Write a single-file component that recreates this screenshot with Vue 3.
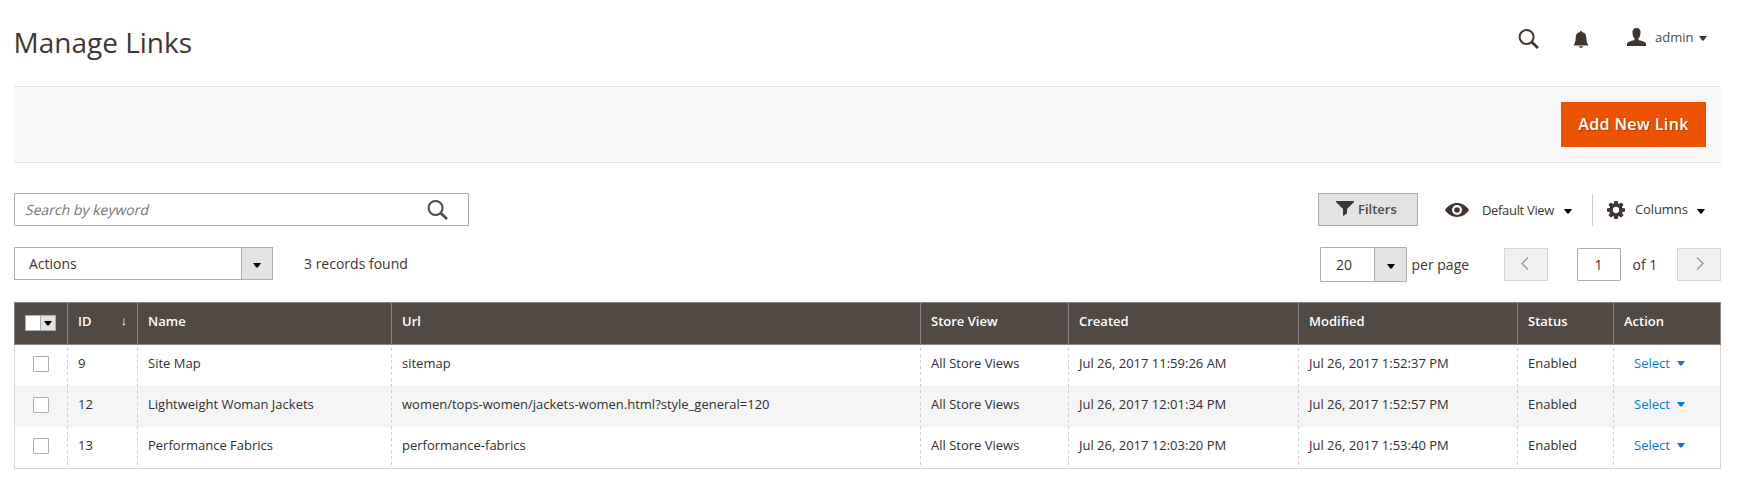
<script setup>
const columns = ['ID', 'Name', 'Url', 'Store View', 'Created', 'Modified', 'Status', 'Action']
const rows = [
  ['9', 'Site Map', 'sitemap', 'All Store Views', 'Jul 26, 2017 11:59:26 AM', 'Jul 26, 2017 1:52:37 PM', 'Enabled'],
  ['12', 'Lightweight Woman Jackets', 'women/tops-women/jackets-women.html?style_general=120', 'All Store Views', 'Jul 26, 2017 12:01:34 PM', 'Jul 26, 2017 1:52:57 PM', 'Enabled'],
  ['13', 'Performance Fabrics', 'performance-fabrics', 'All Store Views', 'Jul 26, 2017 12:03:20 PM', 'Jul 26, 2017 1:53:40 PM', 'Enabled'],
]
</script>

<template>
  <main class="page">
    <header class="header">
      <h1>Manage Links</h1>
      <div class="tools">
        <svg class="search" viewBox="0 0 21 20"><circle cx="8.6" cy="8" r="7" /><path d="M13.4 12.8 20 19" /></svg>
        <svg class="bell" viewBox="0 0 16 17"><path d="M7 1c0-1.300 2-1.300 2 0 3 .5 4.200 2.500 4.300 5.400.1 3.500.7 5.900 2.200 8.100H.5c1.500-2.200 2.100-4.600 2.200-8.100C2.800 3.500 4 1.500 7 1ZM6 15.300h4c-.6 2-3.400 2-4 0Z" /></svg>
        <svg class="user" viewBox="0 0 19 18"><path d="M9.500 0c3 0 4.400 2 4 5-.1 2.700-1 4.500-2 5.500v1.300c1.300 1.200 7.200 1.300 7.500 4.200v2H0v-2c.3-2.900 6.200-3 7.500-4.200v-1.300c-1-1-1.900-2.800-2-5.500C5.100 2 6.500 0 9.500 0Z" /></svg>
        <span class="admin">admin</span>
        <svg class="caret" viewBox="0 0 8 5"><path d="M0 0h8L4.800 4.500H3.200Z" /></svg>
      </div>
    </header>
    <section class="actions-bar"><button class="primary">Add New Link</button></section>

    <section class="toolbar first">
      <div class="keyword">
        <span>Search by keyword</span>
        <svg class="search" viewBox="0 0 21 20"><circle cx="8.600" cy="8" r="7" /><path d="M13.4 12.8 20 19" /></svg>
      </div>
      <div class="view-tools">
        <button class="filters">
          <svg class="funnel" viewBox="0 0 18 15"><path d="M0 0h18v1L11 8v4.500L7 15V8L0 1Z" /></svg>Filters
        </button>
        <svg class="eye" viewBox="0 0 24 14"><path fill-rule="evenodd" d="M0 7C6-2.300 18-2.300 24 7 18 16.300 6 16.300 0 7Zm12-5a5 5 0 1 0 0 10 5 5 0 0 0 0-10Z" /><circle cx="12" cy="7" r="2.800" /></svg>
        <span class="view-label">Default View</span>
        <svg class="caret black" viewBox="0 0 8 5"><path d="M0 0h8L4.800 4.500H3.200Z" /></svg>
        <i class="divider"></i>
        <svg class="gear" viewBox="-9 -9 18 18">
          <circle class="ring" r="4.900" />
          <path v-for="n in 8" :key="n" :transform="`rotate(${n * 45})`" d="M-2.300-5.500-1.600-9H1.600L2.300-5.500Z" />
        </svg>
        <span class="columns-label">Columns</span>
        <svg class="caret black" viewBox="0 0 8 5"><path d="M0 0h8L4.800 4.500H3.200Z" /></svg>
      </div>
    </section>

    <section class="toolbar second">
      <div class="select mass"><span>Actions</span><b><svg class="caret black" viewBox="0 0 8 5"><path d="M0 0h8L4.800 4.500H3.200Z" /></svg></b></div>
      <span class="records">3 records found</span>
      <div class="pager">
        <div class="select size"><span>20</span><b><svg class="caret black" viewBox="0 0 8 5"><path d="M0 0h8L4.800 4.500H3.200Z" /></svg></b></div>
        <span class="per">per page</span>
        <div class="page-btn prev"><svg viewBox="0 0 8 13"><path d="M7 .5 1 6.500l6 6" /></svg></div>
        <div class="page-input">1</div>
        <span class="of">of 1</span>
        <div class="page-btn next"><svg viewBox="0 0 8 13"><path d="m1 .5 6 6-6 6" /></svg></div>
      </div>
    </section>

    <section class="grid">
      <div class="row head">
        <div class="multi"><span class="multi-box"><i></i><b><svg viewBox="0 0 8 5"><path d="M0 0h8L4.800 4.500H3.200Z" /></svg></b></span></div>
        <div v-for="c in columns" :key="c" class="cell">{{ c }}<span v-if="c === 'ID'" class="sort">↓</span></div>
      </div>
      <div class="body">
        <div v-for="r in rows" :key="r[0]" class="row data">
          <div class="check"><i></i></div>
          <div v-for="(v, i) in r" :key="i" class="cell">{{ v }}</div>
          <div class="cell pick">Select<svg class="caret" viewBox="0 0 8 5"><path d="M0 0h8L4.800 4.500H3.200Z" /></svg></div>
        </div>
      </div>
    </section>
  </main>
</template>

<style>
body { margin: 0; background: #fff; }
</style>

<style scoped>
* { box-sizing: border-box; }
.page { width: 1751px; height: 502px; padding: 0 30px 0 14px; font: 14px/20px "Open Sans", sans-serif; color: #41362f; overflow: hidden; }
svg { display: block; flex: none; fill: #41362f; }
.header { height: 86px; display: flex; justify-content: space-between; }
h1 { margin: 23px 0 0 -.5px; font-size: 28px; line-height: 38px; font-weight: 400; }
.tools { display: flex; align-items: flex-start; padding-right: 14px; }
.search { width: 21px; height: 20px; fill: none; stroke: #514943; stroke-width: 2; }
.search path { stroke-width: 2.800; }
.tools .search { margin-top: 29px; stroke: #41362f; }
.bell { width: 16px; height: 17px; margin: 31px 0 0 34px; }
.user { width: 19px; height: 18px; margin: 28px 0 0 38px; }
.admin { width: 37px; margin: 27px 7px 0 9px; font-size: 13px; color: #514943; }
.caret { width: 8px; height: 5px; }
.tools .caret { margin-top: 36px; }
.black { fill: #000; }
.actions-bar { height: 77px; border: solid #e3e3e3; border-width: 1px 0; background: #f8f8f8; padding: 15px 15px 0 0; display: flex; justify-content: flex-end; }
button { font-family: inherit; }
.primary { width: 145px; height: 45px; border: 0; padding: 0 0 2px; background: #eb5202; color: #fff; font-size: 16px; font-weight: 600; letter-spacing: .36px; text-shadow: 1px 1px 0 rgba(0,0,0,.25); }
.toolbar { display: flex; white-space: nowrap; }
.first { margin-top: 30px; height: 33px; justify-content: space-between; }
.keyword { width: 455px; border: 1px solid #adadad; border-radius: 1px; display: flex; justify-content: space-between; padding: 6px 20px 0 10px; color: #757575; }
.keyword span { height: 20px; transform: skewX(-13deg); transform-origin: 0 75%; }
.view-tools { display: flex; align-items: center; padding-right: 16px; }
.filters { width: 100px; height: 33px; border: 1px solid #adadad; border-radius: 0; background: #e3e3e3; display: flex; align-items: center; padding: 0 0 2px 17px; gap: 4px; color: #514943; font-size: 13px; font-weight: 600; }
.funnel { width: 18px; height: 15px; }
.eye { width: 24px; height: 14px; margin-left: 27px; }
.view-label { width: 72px; margin: 1px 10px 0 13px; font-size: 13px; letter-spacing: -.33px; }
.black.caret { margin-top: 3px; }
.divider { width: 1px; height: 32px; background: #ccc; margin: 0 14px 0 20px; }
.gear { width: 18px; height: 18px; }
.ring { fill: none; stroke: #41362f; stroke-width: 3.500; }
.columns-label { width: 52px; margin: 0 10px 1px; font-size: 13px; letter-spacing: -.1px; }
.second { height: 35px; margin-top: 21px; }
.select { border: 1px solid #adadad; display: flex; }
.select span { flex: 1; }
.select b { border-left: 1px solid #adadad; background: #e3e3e3; display: flex; align-items: center; justify-content: center; }
.mass { width: 259px; height: 33px; padding-left: 14px; line-height: 31px; }
.mass b { width: 31px; }
.records { margin: 7px 0 0 31px; }
.pager { display: flex; margin-left: auto; }
.size { width: 87px; height: 35px; padding-left: 15px; line-height: 34px; border-radius: 1px; }
.size b { width: 32px; }
.per { width: 58px; margin: 8px 0 0 4.500px; }
.page-btn { width: 44px; height: 33px; margin-top: 1px; border: 1px solid #d6d6d6; background: #f0f0f0; display: flex; align-items: center; justify-content: center; padding-bottom: 2px; }
.page-btn svg { width: 8px; height: 13px; fill: none; stroke: #9c9895; stroke-width: 1.500; }
.prev { margin-left: 34.500px; padding-right: 2px; }
.page-input { width: 44px; height: 33px; margin: 1px 0 0 29px; border: 1px solid #adadad; border-radius: 1px; text-align: center; line-height: 32px; padding-right: 1px; }
.of { width: 24px; margin: 8px 0 0 11.500px; }
.next { margin-left: 20.500px; padding-left: 2px; }
.grid { margin-top: 20px; font-size: 13px; }
.row { display: grid; grid-template-columns: 53px 70px 254px 529px 148px 230px 219px 96px 108px; }
.head { height: 43px; background: #514943; color: #fff; font-weight: 600; box-shadow: inset 0 0 0 1px #8a837f; }
.head .cell { border-left: 1px solid #8a837f; padding: 9px 9px 0 10px; display: flex; justify-content: space-between; }
.sort { font-weight: 400; font-size: 13px; line-height: 18px; margin-right: 1px; }
.multi { padding: 13px 0 0 11px; }
.multi-box { width: 31px; height: 16px; border: 1px solid #adadad; display: flex; background: #fff; }
.multi-box i { flex: 1; }
.multi-box b { width: 15px; border-left: 1px solid #adadad; background: #e3e3e3; padding: 5px 0 0 3px; }
.multi-box svg { width: 8px; height: 5px; fill: #000; }
.body { height: 124px; border: 1px solid #d6d6d6; border-top: 0; }
.data { height: 41px; margin-left: -1px; color: #303030; }
.data:nth-child(2) { background: linear-gradient(#f5f5f5, #f5f5f5) 1px 0 no-repeat; }
.data .cell { padding: 8px 0 0 11px; white-space: nowrap; background: repeating-linear-gradient(#ccc 0 3px, transparent 3px 6px) 0 0 / 1px 100% no-repeat; }
.data:nth-child(1) .cell { background-position: 0 3px; }
.data:nth-child(2) .cell { background-position: 0 -2px; background-size: 1px 44px; }
.data:nth-child(3) .cell { background-position: 0 -1px; background-size: 1px 43px; }
.check { padding: 11px 0 0 19px; }
.check i { display: block; width: 16px; height: 16px; border: 1px solid #adadad; border-radius: 1px; background: #fff; }
.data .pick { display: flex; padding-left: 21px; color: #007bdb; }
.pick .caret { fill: #007bdb; margin: 8px 0 0 7px; }
</style>
